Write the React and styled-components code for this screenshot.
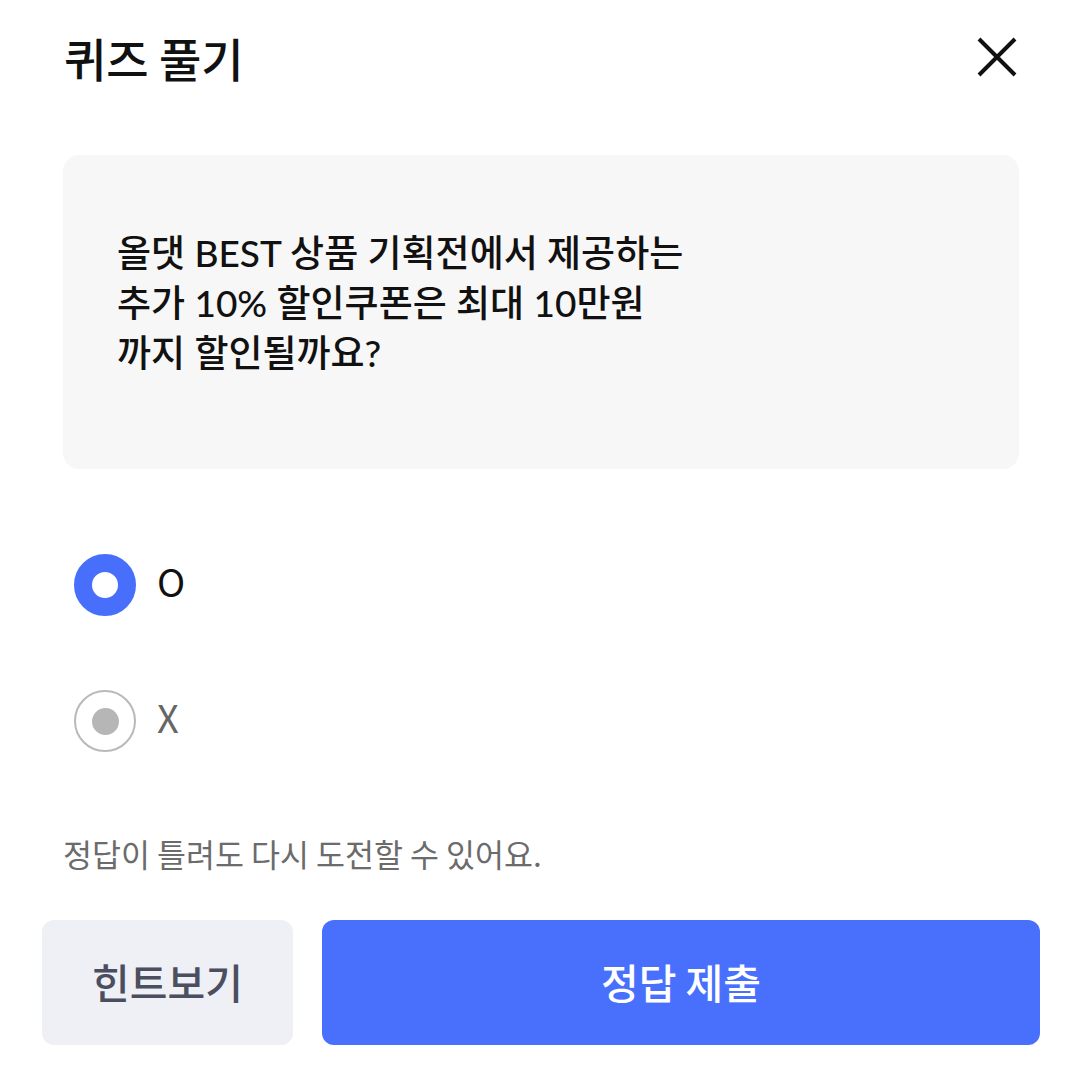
import React, { useState } from "react"
import styled, { createGlobalStyle } from "styled-components"

const GlobalStyle = createGlobalStyle`
  html, body {
    margin: 0;
    padding: 0;
    background: #ffffff;
  }
  body {
    font-family: Lato, "Noto Sans CJK KR", sans-serif;
    color: #111111;
  }
`

const Sheet = styled.div`
  width: 1080px;
  height: 1086px;
  box-sizing: border-box;
  display: flex;
  flex-direction: column;
`

const Header = styled.div`
  display: flex;
  justify-content: space-between;
  align-items: center;
  padding: 26px 58px 0 64px;
  height: 62px;
`

const Title = styled.h1`
  margin: 0;
  font-family: "Noto Sans CJK KR", sans-serif;
  font-size: 46px;
  font-weight: 500;
  line-height: 56px;
  color: #111111;
`

const CloseButton = styled.button`
  width: 50px;
  height: 50px;
  padding: 0;
  border: none;
  background: transparent;
  display: flex;
  align-items: center;
  justify-content: center;
  cursor: pointer;
`

const Body = styled.div`
  padding: 0 61px 0 63px;
  display: flex;
  flex-direction: column;
`

const QuestionCard = styled.div`
  margin-top: 67px;
  height: 314px;
  box-sizing: border-box;
  padding: 73px 54px 0 54px;
  background: #f7f7f7;
  border-radius: 16px;
`

const Question = styled.p`
  margin: 0;
  font-family: Lato, "Noto Sans CJK KR", sans-serif;
  font-size: 37px;
  font-weight: 500;
  line-height: 50px;
  color: #111111;
`

const Options = styled.div`
  margin-top: 85px;
  display: flex;
  flex-direction: column;
  gap: 74px;
`

const Option = styled.label`
  display: flex;
  align-items: center;
  gap: 21px;
  cursor: pointer;
`

const Radio = styled.span`
  width: 62px;
  height: 62px;
  box-sizing: border-box;
  margin-left: 11px;
  border-radius: 50%;
  display: flex;
  align-items: center;
  justify-content: center;
  border: ${p => (p.$checked ? "18px solid #486ffc" : "2px solid #b9b9b9")};
  background: #ffffff;

  &::after {
    content: "";
    width: 27px;
    height: 27px;
    border-radius: 50%;
    background: #b6b6b6;
    display: ${p => (p.$checked ? "none" : "block")};
  }
`

const OptionLabel = styled.span`
  font-family: "Noto Sans CJK KR", sans-serif;
  font-size: 38px;
  font-weight: 400;
  color: ${p => (p.$checked ? "#111111" : "#666666")};
  margin-top: -10px;
`

const Notice = styled.p`
  margin: 81px 0 0 0;
  font-family: "Noto Sans CJK KR", sans-serif;
  font-size: 31.5px;
  font-weight: 400;
  line-height: 40px;
  color: #6b6b6b;
`

const Actions = styled.div`
  margin-top: 47px;
  padding: 0 40px 0 42px;
  display: grid;
  grid-template-columns: 251px 1fr;
  gap: 29px;
`

const ActionButton = styled.button`
  height: 125px;
  border: none;
  border-radius: 12px;
  font-family: "Noto Sans CJK KR", sans-serif;
  font-size: 41px;
  font-weight: 500;
  cursor: pointer;
  padding: 0 0 4px 0;
  background: ${p => (p.$primary ? "#4870fd" : "#eef0f5")};
  color: ${p => (p.$primary ? "#ffffff" : "#4a4e5e")};
`

export default function App() {
  const [answer, setAnswer] = useState("O")

  return (
    <Sheet>
      <GlobalStyle />
      <Header>
        <Title>퀴즈 풀기</Title>
        <CloseButton aria-label="닫기">
          <svg width="40" height="40" viewBox="0 0 40 40">
            <path d="M2 2 L38 38 M38 2 L2 38" stroke="#111" strokeWidth="4" />
          </svg>
        </CloseButton>
      </Header>
      <Body>
        <QuestionCard>
          <Question>
            올댓 BEST 상품 기획전에서 제공하는
            <br />
            추가 10% 할인쿠폰은 최대 10만원
            <br />
            까지 할인될까요?
          </Question>
        </QuestionCard>
        <Options>
          {["O", "X"].map(v => (
            <Option key={v} onClick={() => setAnswer(v)}>
              <Radio $checked={answer === v} />
              <OptionLabel $checked={answer === v}>{v}</OptionLabel>
            </Option>
          ))}
        </Options>
        <Notice>정답이 틀려도 다시 도전할 수 있어요.</Notice>
      </Body>
      <Actions>
        <ActionButton>힌트보기</ActionButton>
        <ActionButton $primary>정답 제출</ActionButton>
      </Actions>
    </Sheet>
  )
}
